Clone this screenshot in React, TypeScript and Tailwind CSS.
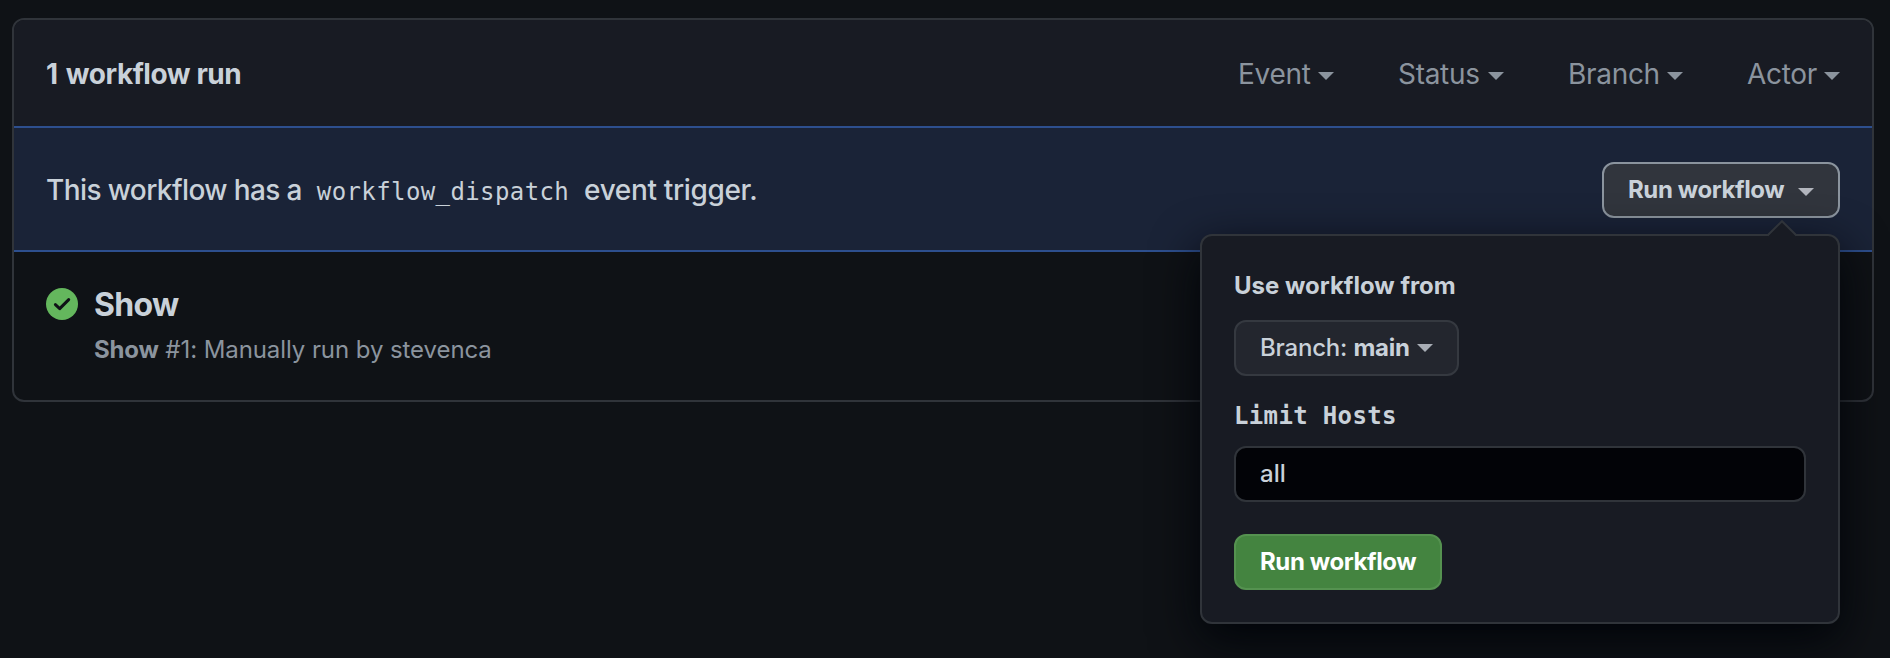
import React from "react";

function Caret({ className = "" }: { className?: string }) {
  return (
    <svg viewBox="0 0 16 8" className={`h-2 w-4 shrink-0 fill-current ${className}`} aria-hidden="true">
      <path d="M0 0h16L8 8z" />
    </svg>
  );
}

function SuccessIcon() {
  return (
    <svg viewBox="0 0 32 32" className="size-8 shrink-0" aria-label="Completed successfully">
      <circle cx="16" cy="16" r="16" fill="#64b75d" />
      <path
        d="M9.4 16.6l4.3 4L22.7 11.6"
        fill="none"
        stroke="#0f1216"
        strokeWidth="3"
        strokeLinecap="round"
        strokeLinejoin="round"
      />
    </svg>
  );
}

const filters = [
  { label: "Event", style: "w-[73px]" },
  { label: "Status", style: "w-[83px]" },
  { label: "Branch", style: "w-[92px]" },
  { label: "Actor", style: "w-[70px]" },
];

function Filters() {
  return (
    <div className="flex gap-[63px] text-[28px] tracking-[-0.3px] text-[#8b949e]">
      {filters.map((f) => (
        <button key={f.label} className="flex items-center gap-2">
          <span className={`${f.style} pl-px whitespace-nowrap text-left`}>{f.label}</span>
          <Caret className="mt-1" />
        </button>
      ))}
    </div>
  );
}

function DispatchPanel() {
  return (
    <div className="absolute top-[72px] right-0 z-10 h-[390px] w-[640px] rounded-xl border-2 border-[#30343a] bg-[#181b23] px-8 pt-[34px] shadow-[0_16px_48px_#010409]">
      <svg viewBox="0 0 30 17" className="absolute -top-[16px] right-[41px] h-[17px] w-[30px]" aria-hidden="true">
        <path d="M0 17L15 2L30 17z" fill="#181b23" />
        <path d="M0.5 15.5L15 1.2L29.5 15.5" fill="none" stroke="#30343a" strokeWidth="2" />
      </svg>
      <h3 className="text-2xl/8 font-[650] tracking-[0px]">Use workflow from</h3>
      <button className="mt-[18px] flex h-14 w-[225px] items-center justify-between rounded-xl border-2 border-[#353940] bg-[#23262e] px-6 text-2xl font-[450] tracking-[-0.2px] whitespace-nowrap">
        <span>
          Branch: <span className="font-[650]">main</span>
        </span>
        <Caret className="text-[#a8adb5]" />
      </button>
      <label
        className="mt-6 block font-['DejaVu_Sans_Mono',monospace] text-2xl/8 font-bold tracking-[0.35px]"
        htmlFor="hosts"
      >
        Limit Hosts
      </label>
      <input
        id="hosts"
        defaultValue="all"
        className="mt-[14px] block h-14 w-full rounded-xl border-2 border-[#30343a] bg-[#020307] px-6 pb-0.5 text-2xl font-[450] outline-none"
      />
      <button className="mt-8 flex h-14 w-[208px] items-center rounded-xl border-2 border-[#559250] bg-[#448440] px-6 text-2xl font-[650] tracking-[-0.4px] whitespace-nowrap text-white">
        Run workflow
      </button>
    </div>
  );
}

export default function App() {
  return (
    <main className="h-[658px] overflow-hidden bg-[#0f1216] pt-[18px] pr-4 pl-3 font-[Inter,sans-serif] text-[#c9d1d9]">
      <section className="rounded-xl border-2 border-[#30343a]">
        <header className="flex h-[106px] items-center justify-between rounded-t-[10px] bg-[#181b23] px-8 pt-0.5">
          <h2 className="text-[28px] font-[650] tracking-[-0.45px]">
            <span className="mr-[2px]">1</span> workflow run
          </h2>
          <Filters />
        </header>
        <div className="flex h-[126px] items-center justify-between border-y-2 border-[#2d4f8e] bg-[#1a2337] px-8 pt-0.5">
          <p className="text-[28px] font-[450] tracking-[-0.6px] whitespace-nowrap">
            This workflow has a{" "}
            <code className="mx-2 font-['DejaVu_Sans_Mono',monospace] text-2xl font-normal tracking-[0.4px]">
              workflow_dispatch
            </code>{" "}
            <span className="tracking-[-0.35px]">event trigger.</span>
          </p>
          <div className="relative">
            <button className="flex h-14 w-[238px] items-center justify-between rounded-xl border-2 border-[#8b949e] bg-[#31353d] px-6 text-2xl font-[650] tracking-[-0.4px] whitespace-nowrap">
              <span>Run workflow</span>
              <Caret className="mt-1 text-[#b2b5bd]" />
            </button>
            <DispatchPanel />
          </div>
        </div>
        <div className="flex h-[148px] gap-4 px-8 pt-9">
          <SuccessIcon />
          <div>
            <h3 className="-mt-px text-[32px]/[36px] font-[650] tracking-[-0.7px]">Show</h3>
            <p className="mt-[9px] text-2xl/9 tracking-[-0.08px] text-[#8b949e]">
              <span className="font-[650] tracking-[-0.2px]">Show</span> #1: Manually run by stevenca
            </p>
          </div>
        </div>
      </section>
    </main>
  );
}
